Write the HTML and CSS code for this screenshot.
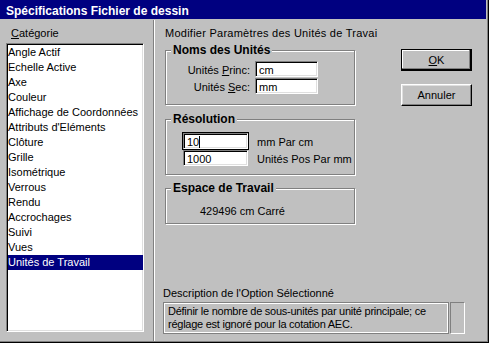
FILE: index.html
```html
<!DOCTYPE html>
<html lang="fr">
<head>
    <meta charset="UTF-8">
    <meta name="viewport" content="width=device-width, initial-scale=1.0">
    <title>Spécifications Fichier de dessin</title>
    <link rel="stylesheet" href="styles.css">
</head>
<body>
    <div class="window">
        <div class="titlebar">Spécifications Fichier de dessin</div>

        <div class="dialog">
            <div class="sidebar">
                <div class="caption"><u>C</u>atégorie</div>
                <ul class="listbox">
                    <li>Angle Actif</li>
                    <li>Echelle Active</li>
                    <li>Axe</li>
                    <li>Couleur</li>
                    <li>Affichage de Coordonnées</li>
                    <li>Attributs d'Eléments</li>
                    <li>Clôture</li>
                    <li>Grille</li>
                    <li>Isométrique</li>
                    <li>Verrous</li>
                    <li>Rendu</li>
                    <li>Accrochages</li>
                    <li>Suivi</li>
                    <li>Vues</li>
                    <li class="selected">Unités de Travail</li>
                </ul>
            </div>

            <div class="separator"></div>

            <div class="main">
                <div class="top">
                    <div class="settings">
                        <div class="heading">Modifier Paramètres des Unités de Travai</div>

                        <fieldset class="group group-names">
                            <legend>Noms des Unités</legend>
                            <div class="names">
                                <label>Unités <u>P</u>rinc:</label>
                                <span class="field">cm</span>
                                <label>Unités <u>S</u>ec:</label>
                                <span class="field">mm</span>
                            </div>
                        </fieldset>

                        <fieldset class="group group-resolution">
                            <legend>Résolution</legend>
                            <div class="resolution">
                                <span class="field focused">10<span class="caret"></span></span>
                                <span class="note">mm Par cm</span>
                                <span class="field">1000</span>
                                <span class="note">Unités Pos Par mm</span>
                            </div>
                        </fieldset>

                        <fieldset class="group group-area">
                            <legend>Espace de Travail</legend>
                            <div class="area">429496 cm Carré</div>
                        </fieldset>
                    </div>

                    <div class="buttons">
                        <button class="button default"><u>O</u>K</button>
                        <button class="button">Annuler</button>
                    </div>
                </div>

                <div class="description">
                    <div class="description-label">Description de l'Option Sélectionné</div>
                    <div class="description-row">
                        <div class="description-text">Définir le nombre de sous-unités par unité principale; ce réglage est ignoré pour la cotation AEC.</div>
                        <div class="description-scroll"></div>
                    </div>
                </div>
            </div>
        </div>
    </div>
</body>
</html>
```

FILE: styles.css
```css
* {
    box-sizing: border-box;
}
body {
    margin: 0;
    font-family: "Liberation Sans", Arial, sans-serif;
    font-size: 11px;
    line-height: 15px;
    color: #000;
    background: #c0c0c0;
}
.window {
    width: 489px;
    height: 343px;
    display: flex;
    flex-direction: column;
    background: #c0c0c0;
    border-right: 1px solid #000;
    border-bottom: 1px solid #000;
    box-shadow: inset -1px -1px 0 #808080;
}
.titlebar {
    height: 19px;
    margin-right: 2px;
    padding: 4px 0 0 6px;
    background: #000080;
    color: #fff;
    font-size: 12px;
    font-weight: bold;
    line-height: 15px;
}
.dialog {
    flex: 1;
    display: flex;
}

/* liste des catégories */
.sidebar {
    width: 153px;
    padding: 7px 0 10px 6px;
    display: flex;
    flex-direction: column;
}
.caption {
    margin: 0 0 2px 5px;
}
.listbox {
    list-style: none;
    margin: 0;
    padding: 1px 0 0;
    width: 138px;
    flex: 1;
    background: #fff;
    border: 1px solid;
    border-color: #808080 #fff #fff #808080;
    box-shadow: inset 1px 1px 0 #000, inset -1px -1px 0 #dfdfdf;
}
.listbox li {
    margin-left: 1px;
    white-space: nowrap;
}
.listbox .selected {
    background: #000080;
    color: #fff;
}
.separator {
    width: 2px;
    margin: 1px 0;
    border-left: 1px solid #808080;
    border-right: 1px solid #fff;
}

/* panneau de droite */
.main {
    flex: 1;
    display: flex;
    flex-direction: column;
    padding: 7px 0 8px 10px;
}
.top {
    display: flex;
    align-items: flex-start;
}
.settings {
    width: 208px;
}
.heading {
    margin-bottom: 2px;
    letter-spacing: 0.25px;
    white-space: nowrap;
}
.group {
    width: 190px;
    min-width: 0;
    margin: 0;
    border: 1px solid #808080;
    box-shadow: inset 1px 1px 0 #fff, 1px 1px 0 #fff;
}
.group legend {
    margin-left: 5px;
    padding: 0 2px;
    background: #c0c0c0;
    font-size: 12px;
    font-weight: bold;
    line-height: 15px;
}
.group-names {
    padding: 3px 0 10px;
}
.group-resolution {
    margin-top: 7px;
    padding: 6px 0 8px;
}
.group-area {
    margin-top: 6px;
    padding: 8px 0 4px;
}
.names {
    display: grid;
    grid-template-columns: 84px 63px;
    gap: 1px 5px;
    align-items: baseline;
}
.names label {
    justify-self: end;
    line-height: 13px;
}
.resolution {
    display: grid;
    grid-template-columns: 65px auto;
    gap: 1px 9px;
    align-items: baseline;
    margin-left: 17px;
}
.resolution .note {
    line-height: 13px;
    white-space: nowrap;
}
.area {
    margin-left: 34px;
}
.field {
    display: block;
    height: 16px;
    padding: 2px 0 0 3px;
    background: #fff;
    border: 1px solid;
    border-color: #808080 #fff #fff #808080;
    box-shadow: inset 1px 1px 0 #000, inset -1px -1px 0 #dfdfdf;
    line-height: 13px;
    white-space: nowrap;
}
.field.focused {
    outline: 1px solid #000;
}
.caret {
    display: inline-block;
    width: 1px;
    height: 12px;
    background: #000;
    vertical-align: -2px;
}

/* boutons */
.buttons {
    display: flex;
    flex-direction: column;
    gap: 13px;
    margin: 23px 0 0 28px;
}
.button {
    width: 71px;
    height: 22px;
    padding: 0;
    font: inherit;
    color: #000;
    background: #c0c0c0;
    border: 1px solid;
    border-color: #fff #000 #000 #fff;
    box-shadow: inset -1px -1px 0 #808080, inset 1px 1px 0 #dfdfdf;
}
.button.default {
    border-color: #000;
    box-shadow: inset -1px -1px 0 #000, inset -2px -2px 0 #808080, inset 1px 1px 0 #fff;
}

/* description */
.description {
    margin: auto 0 0 -2px;
}
.description-label {
    margin-bottom: 1px;
}
.description-row {
    display: flex;
    gap: 1px;
}
.description-text {
    width: 286px;
    height: 32px;
    padding: 2px 4px 1px;
    border: 1px solid #808080;
    box-shadow: inset 0 0 0 1px #fff;
    letter-spacing: -0.25px;
    line-height: 13px;
}
.description-scroll {
    width: 15px;
    height: 32px;
    border: 1px solid;
    border-color: #808080 #fff #fff #808080;
}
```
